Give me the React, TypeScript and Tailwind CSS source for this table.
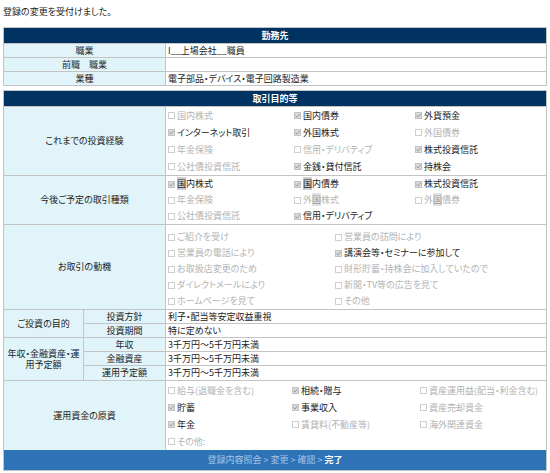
import React from "react";

type Item = { t: React.ReactNode; c?: boolean } | null;

function Box({ c }: { c?: boolean }) {
  return c ? (
    <span className="inline-flex h-[7px] w-[7px] shrink-0 items-center justify-center border border-[#c2c2c2] bg-[#d9d9d9]">
      <svg width="5" height="5" viewBox="0 0 5 5">
        <path d="M0.5 2.5 L2 4 L4.5 1" fill="none" stroke="#9a9a9a" strokeWidth="1" />
      </svg>
    </span>
  ) : (
    <span className="inline-block h-[7px] w-[7px] shrink-0 border border-[#cfcfcf] bg-white" />
  );
}

function Check({ item, h }: { item: Item; h: string }) {
  if (!item) return <div className={h} />;
  return (
    <div className={`flex items-center gap-[2px] whitespace-nowrap ${h} ${item.c ? "text-[#1a1a1a]" : "text-[#b3b3b3]"}`}>
      <Box c={item.c} />
      <span>{item.t}</span>
    </div>
  );
}

const K = ({ children, dim }: { children: React.ReactNode; dim?: boolean }) => (
  <span className={dim ? "bg-[#e2e2e2] text-[#9a9a9a]" : "bg-[#cfcfcf]"}>{children}</span>
);

function CheckSection({
  label,
  items,
  cols,
  lineH,
  pad,
}: {
  label: string;
  items: Item[];
  cols: string;
  lineH: string;
  pad: string;
}) {
  return (
    <div className="grid grid-cols-[162px_1fr] border-t border-[#c4c4c4]">
      <div className="flex items-center justify-center border-r border-[#c4c4c4] bg-[#e1f4fa] text-[#222]">
        {label}
      </div>
      <div className={`grid ${cols} pl-[2px] ${pad}`}>
        {items.map((it, i) => (
          <Check key={i} item={it} h={lineH} />
        ))}
      </div>
    </div>
  );
}

function Row({ label, value, h = "h-[14px]" }: { label: React.ReactNode; value: React.ReactNode; h?: string }) {
  return (
    <div className={`grid grid-cols-[162px_1fr] border-t border-[#c4c4c4] ${h}`}>
      <div className="flex items-center justify-center border-r border-[#c4c4c4] bg-[#e1f4fa] text-[#222]">{label}</div>
      <div className="flex items-center pl-[2px] text-[#222]">{value}</div>
    </div>
  );
}

function SubRow({ label, value, h = "h-[14px]", first }: { label: string; value: string; h?: string; first?: boolean }) {
  return (
    <div className={`grid grid-cols-[82px_1fr] ${first ? "" : "border-t border-[#c4c4c4]"} ${h}`}>
      <div className="flex items-center justify-center border-r border-[#c4c4c4] bg-[#e1f4fa] text-[#222]">{label}</div>
      <div className="flex items-center pl-[2px] text-[#222]">{value}</div>
    </div>
  );
}

export default function App() {
  const s1: Item[] = [
    { t: "国内株式" },
    { t: "国内債券", c: true },
    { t: "外貨預金", c: true },
    { t: "インターネット取引", c: true },
    { t: "外国株式", c: true },
    { t: "外国債券" },
    { t: "年金保険" },
    { t: "信用・デリバティブ" },
    { t: "株式投資信託", c: true },
    { t: "公社債投資信託" },
    { t: "金銭・貸付信託", c: true },
    { t: "持株会", c: true },
  ];
  const s2: Item[] = [
    { t: <><K>国</K>内株式</>, c: true },
    { t: <><K>国</K>内債券</>, c: true },
    { t: "株式投資信託", c: true },
    { t: "年金保険" },
    { t: <>外<K dim>国</K>株式</> },
    { t: <>外<K dim>国</K>債券</> },
    { t: "公社債投資信託" },
    { t: "信用・デリバティブ", c: true },
    null,
  ];
  const s3: Item[] = [
    { t: "ご紹介を受け" },
    { t: "営業員の訪問により" },
    { t: "営業員の電話により" },
    { t: "講演会等・セミナーに参加して", c: true },
    { t: "お取扱店変更のため" },
    { t: "財形貯蓄・持株会に加入していたので" },
    { t: "ダイレクトメールにより" },
    { t: "新聞・TV等の広告を見て" },
    { t: "ホームページを見て" },
    { t: "その他" },
  ];
  const s4: Item[] = [
    { t: "給与(退職金を含む)" },
    { t: "相続・贈与", c: true },
    { t: "資産運用益(配当・利金含む)" },
    { t: "貯蓄", c: true },
    { t: "事業収入", c: true },
    { t: "資産売却資金" },
    { t: "年金", c: true },
    { t: "賃貸料(不動産等)" },
    { t: "海外関連資金" },
    { t: "その他:" },
    null,
    null,
  ];

  return (
    <div className="h-[473px] w-[550px] bg-white pl-[3px] font-['Noto_Sans_CJK_JP','Noto_Sans',sans-serif] text-[9px] leading-[12px] text-[#222] [font-feature-settings:'palt']">
      <div className="flex h-[27px] items-center pb-[3px]">登録の変更を受付けました。</div>

      <div className="w-[544px] border border-[#c4c4c4]">
        <div className="flex h-[15px] items-center justify-center bg-[#003361] font-bold text-white">勤務先</div>
        <Row label="職業" value="I__上場会社__職員" />
        <Row label="前職　職業" value="" />
        <Row label="業種" value="電子部品・デバイス・電子回路製造業" />
      </div>

      <div className="mt-[4px] w-[544px] border border-[#c4c4c4]">
        <div className="flex h-[15px] items-center justify-center bg-[#003361] font-bold text-white">取引目的等</div>
        <CheckSection label="これまでの投資経験" items={s1} cols="grid-cols-[126px_121px_1fr]" lineH="h-[17px]" pad="" />
        <CheckSection label="今後ご予定の取引種類" items={s2} cols="grid-cols-[126px_121px_1fr]" lineH="h-[16px]" pad="" />
        <CheckSection label="お取引の動機" items={s3} cols="grid-cols-[167px_1fr]" lineH="h-[16px]" pad="pt-[4px]" />

        <div className="grid grid-cols-[80px_1fr] border-t border-[#c4c4c4]">
          <div className="flex items-center justify-center border-r border-[#c4c4c4] bg-[#e1f4fa]">ご投資の目的</div>
          <div>
            <SubRow first label="投資方針" value="利子・配当等安定収益重視" h="h-[13px]" />
            <SubRow label="投資期間" value="特に定めない" />
          </div>
        </div>
        <div className="grid grid-cols-[80px_1fr] border-t border-[#c4c4c4]">
          <div className="flex items-center justify-center border-r border-[#c4c4c4] bg-[#e1f4fa] px-[2px] text-center leading-[11px]">
            年収・金融資産・運用予定額
          </div>
          <div>
            <SubRow first label="年収" value="3千万円～5千万円未満" h="h-[13px]" />
            <SubRow label="金融資産" value="3千万円～5千万円未満" />
            <SubRow label="運用予定額" value="3千万円～5千万円未満" h="h-[15px]" />
          </div>
        </div>

        <CheckSection label="運用資金の原資" items={s4} cols="grid-cols-[124px_128px_1fr]" lineH="h-[17px]" pad="pt-[1px]" />

        <div className="flex h-[20px] items-center justify-center bg-[#2e73b6] text-[#a9c5e6]">
          <span>登録内容照会 &gt; 変更 &gt; 確認 &gt; </span>
          <span className="ml-[2px] font-bold text-white">完了</span>
        </div>
      </div>
    </div>
  );
}
